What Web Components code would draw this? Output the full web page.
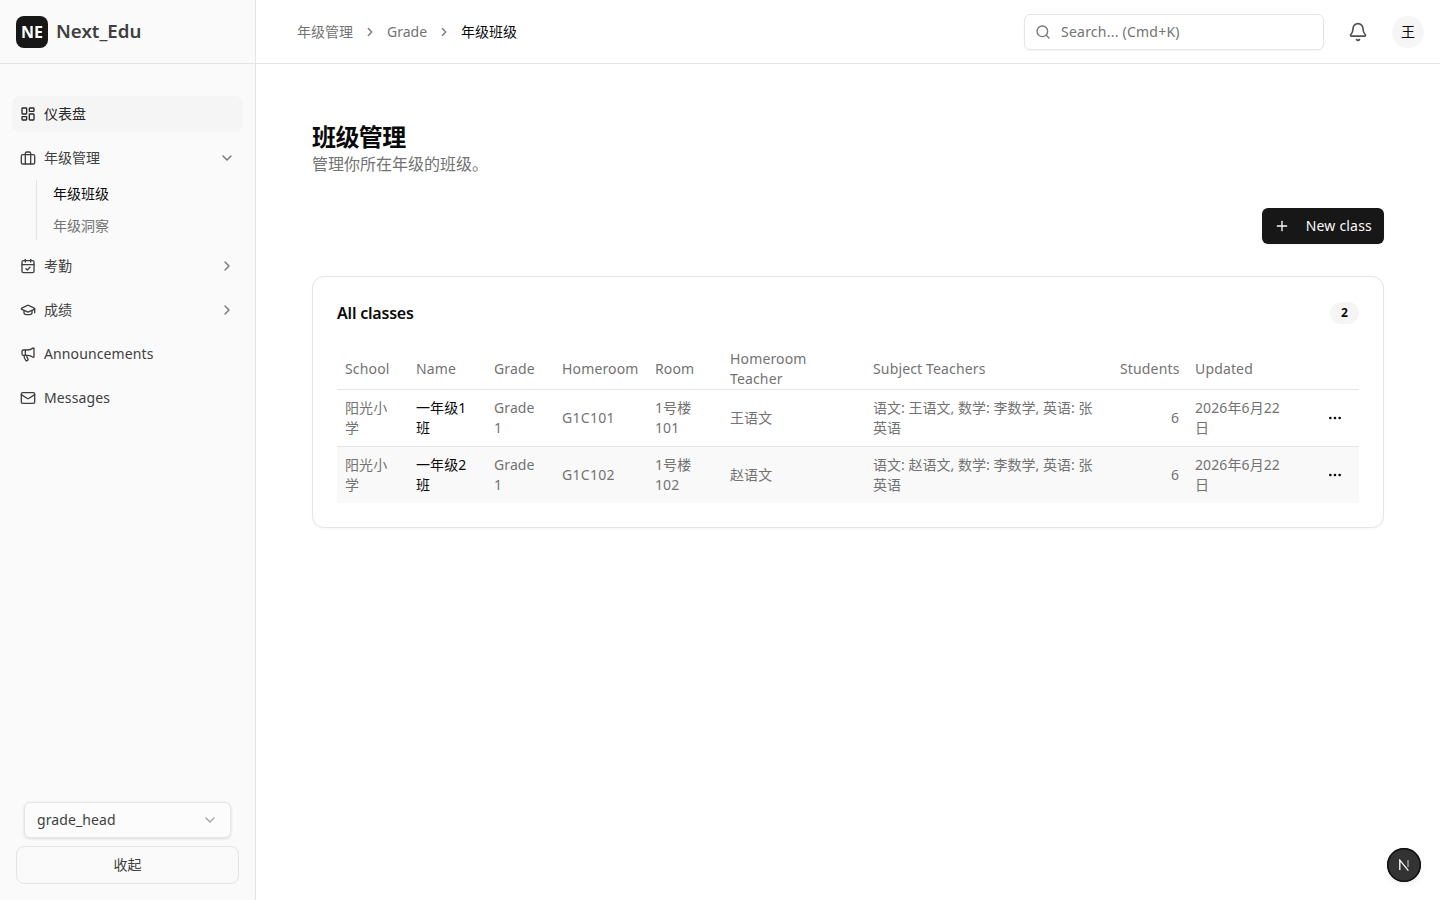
<!DOCTYPE html>
<html lang="zh">
<head>
<meta charset="utf-8">
<title>Next_Edu</title>
<style>
    html, body {
        margin: 0;
        height: 100%;
        background: #fff;
        font-family: "Noto Sans", "Noto Sans CJK SC", sans-serif;
        font-size: 14px;
        line-height: 20px;
        color: #0a0a0a;
    }
</style>
</head>
<body>
<app-shell>
    <edu-sidebar slot="side"></edu-sidebar>
    <top-bar slot="top"></top-bar>
    <page-head></page-head>
    <classes-card></classes-card>
</app-shell>
<dev-badge></dev-badge>

<script>
/* Icons */
const ICONS = {
    dashboard: '<rect x="3" y="3" width="7" height="9" rx="1"/><rect x="14" y="3" width="7" height="5" rx="1"/><rect x="14" y="12" width="7" height="9" rx="1"/><rect x="3" y="16" width="7" height="5" rx="1"/>',
    briefcase: '<rect x="2" y="7" width="20" height="14" rx="2"/><path d="M16 21V5a2 2 0 0 0-2-2h-4a2 2 0 0 0-2 2v16"/>',
    calendar: '<path d="M8 2v4"/><path d="M16 2v4"/><rect x="3" y="4" width="18" height="18" rx="2"/><path d="M3 10h18"/><path d="m9 16 2 2 4-4"/>',
    cap: '<path d="M21.42 10.92a1 1 0 0 0-.02-1.84L12.83 5.18a2 2 0 0 0-1.66 0L2.6 9.08a1 1 0 0 0 0 1.83l8.57 3.91a2 2 0 0 0 1.66 0z"/><path d="M22 10v6"/><path d="M6 12.5V16a6 3 0 0 0 12 0v-3.5"/>',
    megaphone: '<path d="M11 6a13 13 0 0 0 8.4-2.8A1 1 0 0 1 21 4v12a1 1 0 0 1-1.6.8A13 13 0 0 0 11 14H5a2 2 0 0 1-2-2V8a2 2 0 0 1 2-2z"/><path d="M6 14a12 12 0 0 0 2.4 7.2 2 2 0 0 0 3.2-2.4A8 8 0 0 1 10 14"/><path d="M8 6v8"/>',
    mail: '<rect x="2" y="4" width="20" height="16" rx="2"/><path d="m22 7-8.97 5.7a1.94 1.94 0 0 1-2.06 0L2 7"/>',
    down: '<path d="m6 9 6 6 6-6"/>',
    right: '<path d="m9 18 6-6-6-6"/>',
    search: '<circle cx="11" cy="11" r="8"/><path d="m21 21-4.3-4.3"/>',
    bell: '<path d="M10.27 21a2 2 0 0 0 3.46 0"/><path d="M3.26 15.33A1 1 0 0 0 4 17h16a1 1 0 0 0 .74-1.67C19.41 13.96 18 12.5 18 8A6 6 0 0 0 6 8c0 4.5-1.41 5.96-2.74 7.33"/>',
    plus: '<path d="M5 12h14"/><path d="M12 5v14"/>',
    dots: '<circle cx="12" cy="12" r="1"/><circle cx="19" cy="12" r="1"/><circle cx="5" cy="12" r="1"/>'
};

class AppIcon extends HTMLElement {
    connectedCallback() {
        const size = this.getAttribute('size') || 16;
        const name = this.getAttribute('name');
        this.attachShadow({ mode: 'open' });
        this.shadowRoot.innerHTML = `
            <style>
                :host { display: inline-flex; flex: none; width: ${size}px; height: ${size}px; }
                svg { display: block; }
            </style>
            <svg width="${size}" height="${size}" viewBox="0 0 24 24" fill="none" stroke="currentColor"
                 stroke-width="2" stroke-linecap="round" stroke-linejoin="round">${ICONS[name] || ''}</svg>
        `;
    }
}
customElements.define('app-icon', AppIcon);

/* Page frame */
class AppShell extends HTMLElement {
    constructor() {
        super();
        this.attachShadow({ mode: 'open' });
        this.shadowRoot.innerHTML = `
            <style>
                :host {
                    display: grid;
                    grid-template-columns: 256px 1fr;
                    grid-template-rows: 64px 1fr;
                    height: 100vh;
                    overflow: hidden;
                }
                .side { grid-row: 1 / 3; display: flex; min-height: 0; }
                main {
                    padding: 56px;
                    display: flex;
                    flex-direction: column;
                    min-width: 0;
                }
            </style>
            <div class="side"><slot name="side"></slot></div>
            <slot name="top"></slot>
            <main><slot></slot></main>
        `;
    }
}
customElements.define('app-shell', AppShell);

/* Sidebar rows */
class NavItem extends HTMLElement {
    constructor() {
        super();
        this.attachShadow({ mode: 'open' });
    }

    connectedCallback() {
        const arrow = this.getAttribute('arrow');
        this.shadowRoot.innerHTML = `
            <style>
                :host {
                    display: flex;
                    align-items: center;
                    gap: 8px;
                    height: 36px;
                    padding: 0 8px;
                    border-radius: 8px;
                    color: #404040;
                    font-size: 14px;
                    line-height: 20px;
                }
                :host([active]) { background: #f5f5f5; color: #262626; }
                :host([latin]) { letter-spacing: 0.12px; }
                .label { flex: 1; white-space: nowrap; }
                .arrow { color: #737373; display: flex; }
            </style>
            <app-icon name="${this.getAttribute('icon')}"></app-icon>
            <span class="label"><slot></slot></span>
            ${arrow ? `<span class="arrow"><app-icon name="${arrow}"></app-icon></span>` : ''}
        `;
    }
}
customElements.define('nav-item', NavItem);

class EduSidebar extends HTMLElement {
    constructor() {
        super();
        this.attachShadow({ mode: 'open' });
        this.shadowRoot.innerHTML = `
            <style>
                :host {
                    display: flex;
                    flex-direction: column;
                    width: 256px;
                    box-sizing: border-box;
                    background: #fafafa;
                    border-right: 1px solid #e5e5e5;
                }
                .brand {
                    height: 64px;
                    box-sizing: border-box;
                    border-bottom: 1px solid #e5e5e5;
                    display: flex;
                    align-items: center;
                    gap: 8px;
                    padding: 0 16px;
                }
                .logo {
                    width: 32px;
                    height: 32px;
                    border-radius: 8px;
                    background: #171717;
                    color: #fff;
                    display: flex;
                    align-items: center;
                    justify-content: center;
                    font-weight: 700;
                    font-size: 16px;
                }
                .name { font-size: 18.7px; line-height: 26px; font-weight: 600; color: #404040; margin-top: -1px; }
                nav {
                    flex: 1;
                    display: flex;
                    flex-direction: column;
                    gap: 8px;
                    padding: 32px 12px 0;
                }
                .sub {
                    display: flex;
                    flex-direction: column;
                    gap: 4px;
                    margin: -4px 0 0 24px;
                    padding-left: 16px;
                    border-left: 1px solid #e5e5e5;
                }
                .sub div { height: 28px; line-height: 28px; color: #737373; font-size: 14px; }
                .sub .on { color: #0a0a0a; }
                .foot {
                    padding: 0 16px 16px;
                    display: flex;
                    flex-direction: column;
                    gap: 8px;
                }
                .select {
                    margin: 0 8px;
                    height: 36px;
                    box-sizing: border-box;
                    display: flex;
                    align-items: center;
                    justify-content: space-between;
                    padding: 0 12px;
                    background: #fcfcfc;
                    border: 1px solid #e5e5e5;
                    border-radius: 6px;
                    box-shadow: 0 1px 3px rgba(0,0,0,0.12);
                    color: #404040;
                    font-size: 14px;
                    letter-spacing: 0.1px;
                }
                .select app-icon { color: #a3a3a3; }
                .collapse {
                    height: 38px;
                    box-sizing: border-box;
                    border: 1px solid #e5e5e5;
                    border-radius: 8px;
                    display: flex;
                    align-items: center;
                    justify-content: center;
                    color: #404040;
                    font-size: 14px;
                }
            </style>
            <div class="brand">
                <div class="logo">NE</div>
                <div class="name">Next_Edu</div>
            </div>
            <nav>
                <nav-item icon="dashboard" active>仪表盘</nav-item>
                <nav-item icon="briefcase" arrow="down">年级管理</nav-item>
                <div class="sub">
                    <div class="on">年级班级</div>
                    <div>年级洞察</div>
                </div>
                <nav-item icon="calendar" arrow="right">考勤</nav-item>
                <nav-item icon="cap" arrow="right">成绩</nav-item>
                <nav-item icon="megaphone" latin>Announcements</nav-item>
                <nav-item icon="mail" latin>Messages</nav-item>
            </nav>
            <div class="foot">
                <div class="select"><span>grade_head</span><app-icon name="down"></app-icon></div>
                <div class="collapse">收起</div>
            </div>
        `;
    }
}
customElements.define('edu-sidebar', EduSidebar);

/* Header */
class TopBar extends HTMLElement {
    constructor() {
        super();
        this.attachShadow({ mode: 'open' });
        this.shadowRoot.innerHTML = `
            <style>
                :host {
                    display: flex;
                    align-items: center;
                    justify-content: space-between;
                    height: 64px;
                    box-sizing: border-box;
                    padding: 0 16px 0 41px;
                    border-bottom: 1px solid #e5e5e5;
                    background: #fff;
                }
                .crumbs { display: flex; align-items: center; gap: 10px; color: #737373; font-size: 14px; }
                .crumbs .now { color: #0a0a0a; }
                .crumbs app-icon { color: #737373; }
                .tools { display: flex; align-items: center; }
                .search {
                    width: 300px;
                    height: 36px;
                    box-sizing: border-box;
                    display: flex;
                    align-items: center;
                    gap: 10px;
                    padding: 0 10px;
                    border: 1px solid #e5e5e5;
                    border-radius: 6px;
                    box-shadow: 0 1px 2px rgba(0,0,0,0.05);
                    color: #737373;
                    font-size: 14px;
                    letter-spacing: 0.23px;
                }
                .bell { margin: 0 24px 0 24px; color: #525252; display: flex; }
                .avatar {
                    width: 32px;
                    height: 32px;
                    border-radius: 50%;
                    background: #f5f5f5;
                    display: flex;
                    align-items: center;
                    justify-content: center;
                    font-size: 14px;
                    color: #0a0a0a;
                }
            </style>
            <div class="crumbs">
                <span>年级管理</span>
                <app-icon name="right" size="14"></app-icon>
                <span>Grade</span>
                <app-icon name="right" size="14"></app-icon>
                <span class="now">年级班级</span>
            </div>
            <div class="tools">
                <div class="search"><app-icon name="search"></app-icon><span>Search... (Cmd+K)</span></div>
                <span class="bell"><app-icon name="bell" size="20"></app-icon></span>
                <div class="avatar">王</div>
            </div>
        `;
    }
}
customElements.define('top-bar', TopBar);

/* Title block and action */
class PageHead extends HTMLElement {
    constructor() {
        super();
        this.attachShadow({ mode: 'open' });
        this.shadowRoot.innerHTML = `
            <style>
                :host { display: block; }
                h1 {
                    margin: 0 0 -2px;
                    font-size: 24px;
                    line-height: 34px;
                    font-weight: 700;
                    letter-spacing: -0.6px;
                    color: #0a0a0a;
                }
                p { margin: 0; font-size: 16px; line-height: 24px; color: #737373; }
                .actions { display: flex; justify-content: flex-end; margin: 32px 0; }
                button {
                    display: flex;
                    align-items: center;
                    gap: 16px;
                    height: 36px;
                    padding: 0 12px;
                    border: 0;
                    border-radius: 6px;
                    background: #171717;
                    color: #fafafa;
                    font: inherit;
                    font-size: 14px;
                    line-height: 20px;
                    letter-spacing: 0.2px;
                    box-shadow: 0 1px 2px rgba(0,0,0,0.05);
                }
            </style>
            <h1>班级管理</h1>
            <p>管理你所在年级的班级。</p>
            <div class="actions">
                <button><app-icon name="plus"></app-icon>New class</button>
            </div>
        `;
    }
}
customElements.define('page-head', PageHead);

/* Table card */
class ClassesCard extends HTMLElement {
    constructor() {
        super();
        this.attachShadow({ mode: 'open' });
    }

    connectedCallback() {
        const rows = [
            { name: '一年级1班', code: 'G1C101', room: '1号楼101', head: '王语文', subj: '语文: 王语文, 数学: 李数学, 英语: 张英语' },
            { name: '一年级2班', code: 'G1C102', room: '1号楼102', head: '赵语文', subj: '语文: 赵语文, 数学: 李数学, 英语: 张英语' }
        ];
        const widths = [71, 78, 68, 93, 75, 143, 247, 75, 124, 48];

        this.shadowRoot.innerHTML = `
            <style>
                :host {
                    display: block;
                    box-sizing: border-box;
                    height: 252px;
                    padding: 24px;
                    border: 1px solid #e5e5e5;
                    border-radius: 12px;
                    background: #fff;
                    box-shadow: 0 1px 2px rgba(0,0,0,0.03);
                }
                .head {
                    display: flex;
                    align-items: center;
                    justify-content: space-between;
                    height: 24px;
                    margin-bottom: 22px;
                }
                h2 { margin: 0; font-size: 16px; font-weight: 600; letter-spacing: -0.2px; color: #0a0a0a; }
                .count {
                    min-width: 29px;
                    height: 22px;
                    box-sizing: border-box;
                    display: flex;
                    align-items: center;
                    justify-content: center;
                    border-radius: 11px;
                    background: #f5f5f5;
                    font-size: 12px;
                    font-weight: 700;
                    color: #0a0a0a;
                }
                table {
                    width: 1022px;
                    table-layout: fixed;
                    border-collapse: collapse;
                    font-size: 14px;
                    line-height: 20px;
                    letter-spacing: 0.1px;
                    color: #737373;
                }
                th {
                    font-weight: 400;
                    text-align: left;
                    padding: 1px 8px 0;
                    height: 41px;
                    white-space: nowrap;
                    letter-spacing: 0.15px;
                    border-bottom: 1px solid #e5e5e5;
                }
                td { padding: 8px; border-bottom: 1px solid #e5e5e5; }
                tr:last-child td { border-bottom: 0; }
                tbody tr:nth-child(2) { background: #f9f9f9; }
                .num { text-align: right; }
                .name { color: #0a0a0a; }
                .code { letter-spacing: 0.3px; }
                .subj { letter-spacing: 0.02px; }
                .date { padding-right: 30px; }
                .more { color: #0a0a0a; padding: 0; }
                .more app-icon { display: flex; margin: 0 auto; }
            </style>
            <div class="head">
                <h2>All classes</h2>
                <span class="count">2</span>
            </div>
            <table>
                <colgroup>${widths.map(w => `<col style="width:${w}px">`).join('')}</colgroup>
                <thead>
                    <tr>
                        <th>School</th><th>Name</th><th>Grade</th><th>Homeroom</th><th>Room</th>
                        <th>Homeroom<br>Teacher</th><th>Subject Teachers</th>
                        <th class="num">Students</th><th>Updated</th><th></th>
                    </tr>
                </thead>
                <tbody>
                    ${rows.map(r => `
                        <tr>
                            <td>阳光小学</td>
                            <td class="name">${r.name}</td>
                            <td>Grade 1</td>
                            <td class="code">${r.code}</td>
                            <td>${r.room}</td>
                            <td>${r.head}</td>
                            <td class="subj">${r.subj}</td>
                            <td class="num">6</td>
                            <td class="date">2026年6月22日</td>
                            <td class="more"><app-icon name="dots"></app-icon></td>
                        </tr>
                    `).join('')}
                </tbody>
            </table>
        `;
    }
}
customElements.define('classes-card', ClassesCard);

/* Floating dev indicator */
class DevBadge extends HTMLElement {
    constructor() {
        super();
        this.attachShadow({ mode: 'open' });
        this.shadowRoot.innerHTML = `
            <style>
                :host {
                    position: fixed;
                    right: 19px;
                    bottom: 18px;
                    width: 34px;
                    height: 34px;
                    border-radius: 50%;
                    background: #333;
                    box-shadow: inset 0 0 0 1.5px #111, 0 2px 6px rgba(0,0,0,0.08);
                    display: flex;
                    align-items: center;
                    justify-content: center;
                }
                svg { display: block; }
            </style>
            <svg width="12" height="12" viewBox="0 0 12 12" fill="none" stroke="#fff" stroke-width="1.3">
                <path d="M1.8 11V1.2L10.4 11.6"/>
                <path d="M10 1v7" stroke="#aaa"/>
            </svg>
        `;
    }
}
customElements.define('dev-badge', DevBadge);
</script>
</body>
</html>
